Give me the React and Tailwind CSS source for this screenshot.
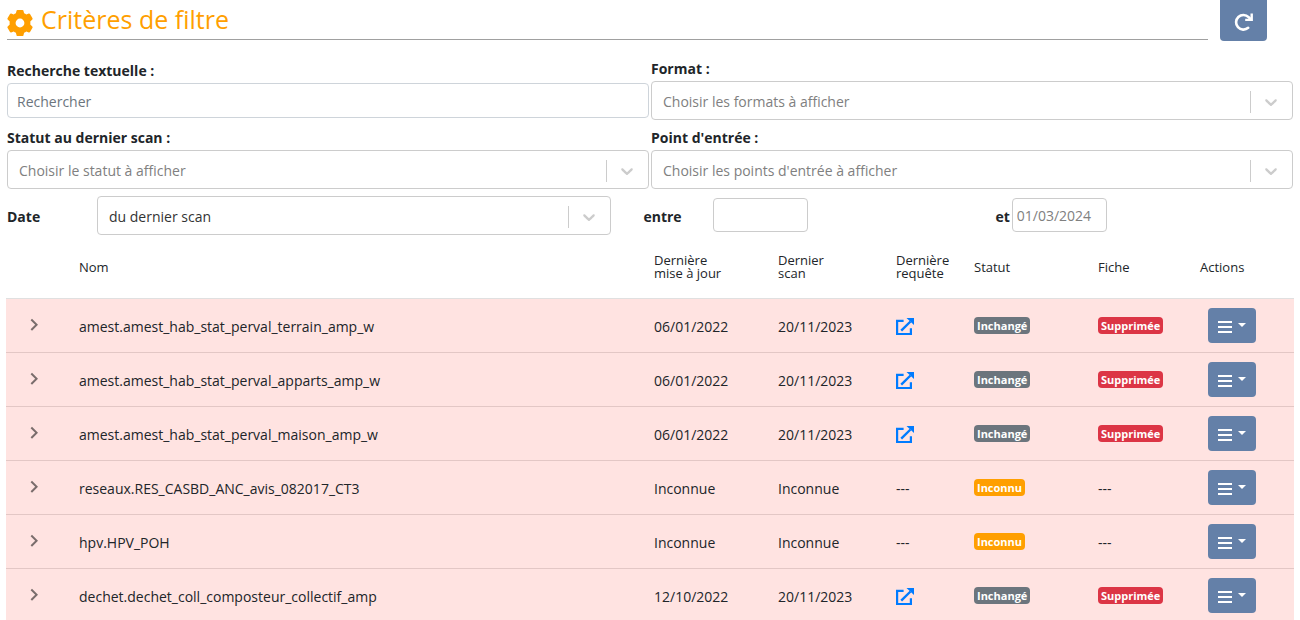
import React from "react";

const INK = "text-[#212529]";

function GearIcon() {
  return (
    <svg viewBox="0 0 26 26" className="size-[26px] shrink-0" fill="#ff9f00" aria-hidden="true">
      <path
        fillRule="evenodd"
        d="M9.6 0.6 Q9.8 0 10.5 0 H15.5 Q16.2 0 16.4 0.6 L17.1 3.2 Q18.3 3.7 19.3 4.4 L21.8 3.6 Q22.6 3.4 23 4 L25.5 8.3 Q25.8 9 25.3 9.5 L23.3 11.4 Q23.5 13 23.3 14.6 L25.3 16.5 Q25.8 17 25.5 17.7 L23 22 Q22.6 22.6 21.8 22.4 L19.3 21.6 Q18.3 22.3 17.1 22.8 L16.4 25.4 Q16.2 26 15.5 26 H10.5 Q9.8 26 9.6 25.4 L8.9 22.8 Q7.7 22.3 6.7 21.6 L4.2 22.4 Q3.4 22.6 3 22 L0.5 17.7 Q0.2 17 0.7 16.5 L2.7 14.6 Q2.5 13 2.7 11.4 L0.7 9.5 Q0.2 9 0.5 8.3 L3 4 Q3.4 3.4 4.2 3.6 L6.7 4.4 Q7.7 3.7 8.9 3.2 Z M13 8.6 A4.4 4.4 0 1 0 13 17.4 A4.4 4.4 0 1 0 13 8.6 Z"
      />
    </svg>
  );
}

function RefreshIcon() {
  return (
    <svg viewBox="0 0 20 20" className="size-5" fill="none" stroke="#fff" aria-hidden="true">
      <path d="M14.2 15.8 A7.3 7.3 0 1 1 14.6 5.2 L16.4 7" strokeWidth="2.6" strokeLinecap="round" />
      <path d="M17.7 1.4 V7.9 H11.2" strokeWidth="2.4" />
    </svg>
  );
}

function ExternalIcon() {
  return (
    <svg viewBox="0 0 18 18" className="size-[18px]" aria-hidden="true">
      <path d="M7.6 2.9 H1.1 V16 H14.9 V10.2" fill="none" stroke="#007bff" strokeWidth="2.2" />
      <path d="M5.2 12.6 L14.5 3.5" fill="none" stroke="#007bff" strokeWidth="2.4" />
      <path d="M10.5 0 H18 V7 Z" fill="#007bff" />
    </svg>
  );
}

function ChevronDown() {
  return (
    <svg viewBox="0 0 20 20" className="size-5" fill="#cccccc" aria-hidden="true">
      <path d="M4.516 7.548c0.436-0.446 1.043-0.481 1.576 0l3.908 3.747 3.908-3.747c0.533-0.481 1.141-0.446 1.574 0 0.436 0.445 0.408 1.197 0 1.615-0.406 0.418-4.695 4.502-4.695 4.502-0.217 0.223-0.502 0.335-0.787 0.335s-0.57-0.112-0.789-0.335c0 0-4.287-4.084-4.695-4.502s-0.436-1.17 0-1.615z" />
    </svg>
  );
}

function ChevronRight() {
  return (
    <svg viewBox="0 0 24 24" className="size-6" fill="#7a6d6c" aria-hidden="true">
      <path d="M8.59 16.34l4.58-4.59-4.58-4.59L10 5.75l6 6-6 6z" />
    </svg>
  );
}

function Select({ id, options, muted }) {
  return (
    <div className="relative">
      <select
        id={id}
        className={`block h-[39px] w-full appearance-none rounded border border-[#cccccc] bg-white pt-0.5 pr-12 pl-[11px] text-sm ${
          muted ? "text-[#808080]" : "text-[#333333]"
        }`}
      >
        {options.map((o) => (
          <option key={o}>{o}</option>
        ))}
      </select>
      <span className="pointer-events-none absolute inset-y-0 right-0.5 flex items-center gap-2.5 pt-0.5 pr-2.5">
        <span className="h-[22px] w-px bg-[#cccccc]" />
        <ChevronDown />
      </span>
    </div>
  );
}

function Field({ id, label, children }) {
  return (
    <div className="flex flex-col justify-end">
      <label htmlFor={id} className="block text-sm leading-6 font-bold">
        {label}
      </label>
      {children}
    </div>
  );
}

const BADGES = {
  Inchangé: "bg-[#6c757d]",
  Inconnu: "bg-[#ff9f00]",
  Supprimée: "bg-[#dc3545]",
};

function Badge({ children }) {
  return (
    <span
      className={`block w-fit rounded px-[3px] text-[11px] leading-[17px] font-bold text-white ${BADGES[children]}`}
    >
      {children}
    </span>
  );
}

const ROWS = [
  ["amest.amest_hab_stat_perval_terrain_amp_w", "06/01/2022", "20/11/2023", "Inchangé", true],
  ["amest.amest_hab_stat_perval_apparts_amp_w", "06/01/2022", "20/11/2023", "Inchangé", true],
  ["amest.amest_hab_stat_perval_maison_amp_w", "06/01/2022", "20/11/2023", "Inchangé", true],
  ["reseaux.RES_CASBD_ANC_avis_082017_CT3", "Inconnue", "Inconnue", "Inconnu", false],
  ["hpv.HPV_POH", "Inconnue", "Inconnue", "Inconnu", false],
  ["dechet.dechet_coll_composteur_collectif_amp", "12/10/2022", "20/11/2023", "Inchangé", true],
];

export default function App() {
  return (
    <main
      className={`bg-white font-['Open_Sans','Noto_Sans',sans-serif] text-sm ${INK}`}
    >
      <header className="flex h-[41px] items-start gap-3 pr-[33px] pl-[7px]">
        <h1 className="flex h-10 flex-1 items-center gap-2 border-b border-[#a0a0a0] text-[25px] text-[#ff9f00]">
          <span className="pt-1.5">
            <GearIcon />
          </span>
          Critères de filtre
        </h1>
        <button
          type="button"
          aria-label="Actualiser"
          className="flex h-[41px] w-[47px] items-center justify-center rounded-b bg-[#6480a8] pt-0.5"
        >
          <RefreshIcon />
        </button>
      </header>

      <form className="pt-4 pr-[7px] pl-[7px]">
        <div className="grid grid-cols-2 gap-x-0.5 gap-y-1.5">
          <Field id="search" label="Recherche textuelle :">
            <input
              id="search"
              type="text"
              placeholder="Rechercher"
              className="mb-0.5 h-[35px] w-full rounded-sm border border-[#ced4da] px-[9px] pt-0.5 text-sm placeholder:text-[#6c757d]"
            />
          </Field>
          <Field id="format" label="Format :">
            <Select id="format" muted options={["Choisir les formats à afficher"]} />
          </Field>
          <Field id="status" label="Statut au dernier scan :">
            <Select id="status" muted options={["Choisir le statut à afficher"]} />
          </Field>
          <Field id="entry" label="Point d'entrée :">
            <Select id="entry" muted options={["Choisir les points d'entrée à afficher"]} />
          </Field>
        </div>

        <div className="mt-[7px] flex items-center">
          <label htmlFor="date-kind" className="w-[7%] pt-0.5 font-bold">
            Date
          </label>
          <div className="w-[40%]">
            <Select id="date-kind" options={["du dernier scan"]} />
          </div>
          <label htmlFor="from" className="ml-8 w-[70px] pt-0.5 font-bold">
            entre
          </label>
          <input
            id="from"
            type="text"
            className="mb-0.5 h-[34px] w-[95px] rounded border border-[#cccccc] px-1 pt-0.5 text-sm"
          />
          <div className="ml-[187px] flex items-center gap-0.5">
            <label htmlFor="to" className="pt-0.5 font-bold">
              et
            </label>
            <input
              id="to"
              type="text"
              placeholder="01/03/2024"
              className="mb-0.5 h-[34px] w-[95px] rounded border border-[#cccccc] px-1 pt-0.5 text-sm placeholder:text-[#808080]"
            />
          </div>
        </div>
      </form>

      <div className="px-1.5">
        <table className="w-full table-fixed border-collapse text-left">
          <colgroup>
            <col className="w-14" />
            <col />
            <col className="w-[124px]" />
            <col className="w-[118px]" />
            <col className="w-[78px]" />
            <col className="w-[124px]" />
            <col className="w-[102px]" />
            <col className="w-[111px]" />
          </colgroup>
          <thead>
            <tr className="h-[63px] border-b border-[#e0e0e0] text-[13px] leading-[13px] [&>th]:pt-0.5 [&>th]:pl-[17px] [&>th]:font-medium">
              <th />
              <th>Nom</th>
              <th>
                Dernière
                <br />
                mise à jour
              </th>
              <th>
                Dernier
                <br />
                scan
              </th>
              <th>
                Dernière
                <br />
                requête
              </th>
              <th>Statut</th>
              <th>Fiche</th>
              <th>Actions</th>
            </tr>
          </thead>
          <tbody>
            {ROWS.map(([name, updated, scanned, status, removed]) => (
              <tr
                key={name}
                className="h-[54px] border-b border-[#e3c7c5] bg-[#ffe3e1] [&>td]:pl-[17px]"
              >
                <td>
                  <button type="button" aria-label="Développer" className="-ml-px block">
                    <ChevronRight />
                  </button>
                </td>
                <td className="pt-[3px]">{name}</td>
                <td className="pt-[3px]">{updated}</td>
                <td className="pt-[3px]">{scanned}</td>
                <td className="pt-[3px]">
                  {removed ? (
                    <a href="#requete" aria-label="Dernière requête" className="block">
                      <ExternalIcon />
                    </a>
                  ) : (
                    "---"
                  )}
                </td>
                <td>
                  <Badge>{status}</Badge>
                </td>
                <td className={removed ? "" : "pt-[3px]"}>
                  {removed ? <Badge>Supprimée</Badge> : "---"}
                </td>
                <td>
                  <button
                    type="button"
                    aria-label="Actions"
                    className="ml-2 flex h-[35px] w-12 items-center justify-center gap-1.5 rounded-sm bg-[#6480a8]"
                  >
                    <svg viewBox="0 0 14 14" className="mt-1 size-3.5" fill="#fff" aria-hidden="true">
                      <path d="M0 1h14v2h-14z M0 6h14v2h-14z M0 11h14v2h-14z" />
                    </svg>
                    <svg viewBox="0 0 8 4" className="h-1 w-2" fill="#fff" aria-hidden="true">
                      <path d="M0 0h8L4 4z" />
                    </svg>
                  </button>
                </td>
              </tr>
            ))}
          </tbody>
        </table>
      </div>
    </main>
  );
}
